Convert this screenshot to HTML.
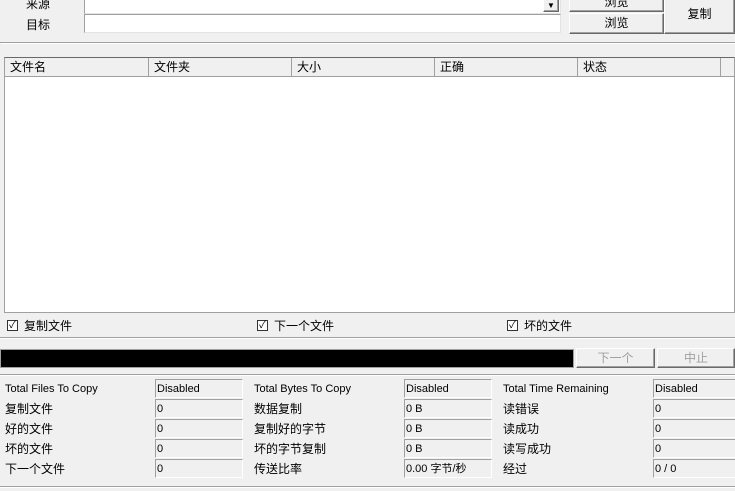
<!DOCTYPE html><html><head><meta charset="utf-8"><style>
*{box-sizing:border-box}
body{margin:0;width:735px;height:491px;background:#f0f0f0;font-family:"Liberation Sans","Noto Sans CJK SC",sans-serif;font-size:12px;color:#000;position:relative;overflow:hidden}
.a{position:absolute}
.in{background:#fff;border:1px solid #a0a0a0;border-right-color:#e3e3e3;border-bottom-color:#e3e3e3}
.btn{background:#f0f0f0;border:1px solid;border-color:#fff #696969 #696969 #fff;box-shadow:inset -1px -1px 0 #a0a0a0;text-align:center}
.hd{top:58px;height:19px;border-right:1px solid #a0a0a0;padding-left:5px;line-height:18px;background:#f0f0f0;border-bottom:1px solid #a0a0a0}
.cb{width:11px;height:11px;border:1px solid #333;background:#fff;font-size:10px;line-height:9px;text-align:center}
.v{width:88px;height:19px;margin-bottom:1px;border:1px solid #a0a0a0;border-right-color:#fff;border-bottom-color:#fff;font-size:11px;line-height:19px;padding-left:1px}
.l{font-size:12px;line-height:20px}
.e{font-size:11px}
</style></head><body>
<div class="a" style="left:26px;top:-5px">来源</div>
<div class="a" style="left:26px;top:16px">目标</div>
<div class="a in" style="left:84px;top:-6px;width:477px;height:20px"></div>
<div class="a btn" style="left:543px;top:-4px;width:16px;height:16px;font-size:8px;line-height:18px">▼</div>
<div class="a in" style="left:84px;top:14px;width:477px;height:19px"></div>
<div class="a btn" style="left:569px;top:-8px;width:95px;height:20px;line-height:18px">浏览</div>
<div class="a btn" style="left:569px;top:13px;width:95px;height:21px;line-height:19px">浏览</div>
<div class="a btn" style="left:664px;top:-4px;width:71px;height:38px;line-height:34px">复制</div>
<div class="a" style="left:0;top:42px;width:735px;height:1px;background:#a0a0a0"></div>
<div class="a" style="left:1px;top:43px;width:734px;height:1px;background:#fff"></div>
<div class="a" style="left:4px;top:57px;width:731px;height:256px;background:#fff;border:1px solid #a0a0a0;border-top-color:#696969"></div>
<div class="a hd" style="left:5px;width:144px">文件名</div>
<div class="a hd" style="left:149px;width:143px">文件夹</div>
<div class="a hd" style="left:292px;width:143px">大小</div>
<div class="a hd" style="left:435px;width:143px">正确</div>
<div class="a hd" style="left:578px;width:143px">状态</div>
<div class="a hd" style="left:721px;width:14px"></div>
<div class="a cb" style="left:7px;top:320px">✓</div><div class="a" style="left:24px;top:317px">复制文件</div>
<div class="a cb" style="left:257px;top:320px">✓</div><div class="a" style="left:274px;top:317px">下一个文件</div>
<div class="a cb" style="left:507px;top:320px">✓</div><div class="a" style="left:524px;top:317px">坏的文件</div>
<div class="a" style="left:0;top:337px;width:735px;height:1px;background:#a0a0a0"></div>
<div class="a" style="left:0;top:338px;width:735px;height:1px;background:#fff"></div>
<div class="a" style="left:0;top:349px;width:574px;height:19px;background:#000;border:1px solid #a0a0a0"></div>
<div class="a btn" style="left:576px;top:348px;width:79px;height:20px;line-height:18px;color:#a0a0a0">下一个</div>
<div class="a btn" style="left:657px;top:348px;width:78px;height:20px;line-height:18px;color:#a0a0a0">中止</div>
<div class="a" style="left:0;top:374px;width:735px;height:1px;background:#a0a0a0"></div>
<div class="a" style="left:0;top:375px;width:735px;height:1px;background:#fff"></div>

<div class="a" style="left:5px;top:379px">
<div class="l e">Total Files To Copy</div><div class="l">复制文件</div><div class="l">好的文件</div><div class="l">坏的文件</div><div class="l">下一个文件</div></div>
<div class="a" style="left:155px;top:379px"><div class="v">Disabled</div><div class="v">0</div><div class="v">0</div><div class="v">0</div><div class="v">0</div></div>
<div class="a" style="left:254px;top:379px">
<div class="l e">Total Bytes To Copy</div><div class="l">数据复制</div><div class="l">复制好的字节</div><div class="l">坏的字节复制</div><div class="l">传送比率</div></div>
<div class="a" style="left:404px;top:379px"><div class="v">Disabled</div><div class="v">0 B</div><div class="v">0 B</div><div class="v">0 B</div><div class="v">0.00 字节/秒</div></div>
<div class="a" style="left:503px;top:379px">
<div class="l e">Total Time Remaining</div><div class="l">读错误</div><div class="l">读成功</div><div class="l">读写成功</div><div class="l">经过</div></div>
<div class="a" style="left:653px;top:379px"><div class="v">Disabled</div><div class="v">0</div><div class="v">0</div><div class="v">0</div><div class="v">0 / 0</div></div>
<div class="a" style="left:0;top:486px;width:735px;height:1px;background:#a0a0a0"></div>
<div class="a" style="left:0;top:487px;width:735px;height:1px;background:#fff"></div>
</body></html>
